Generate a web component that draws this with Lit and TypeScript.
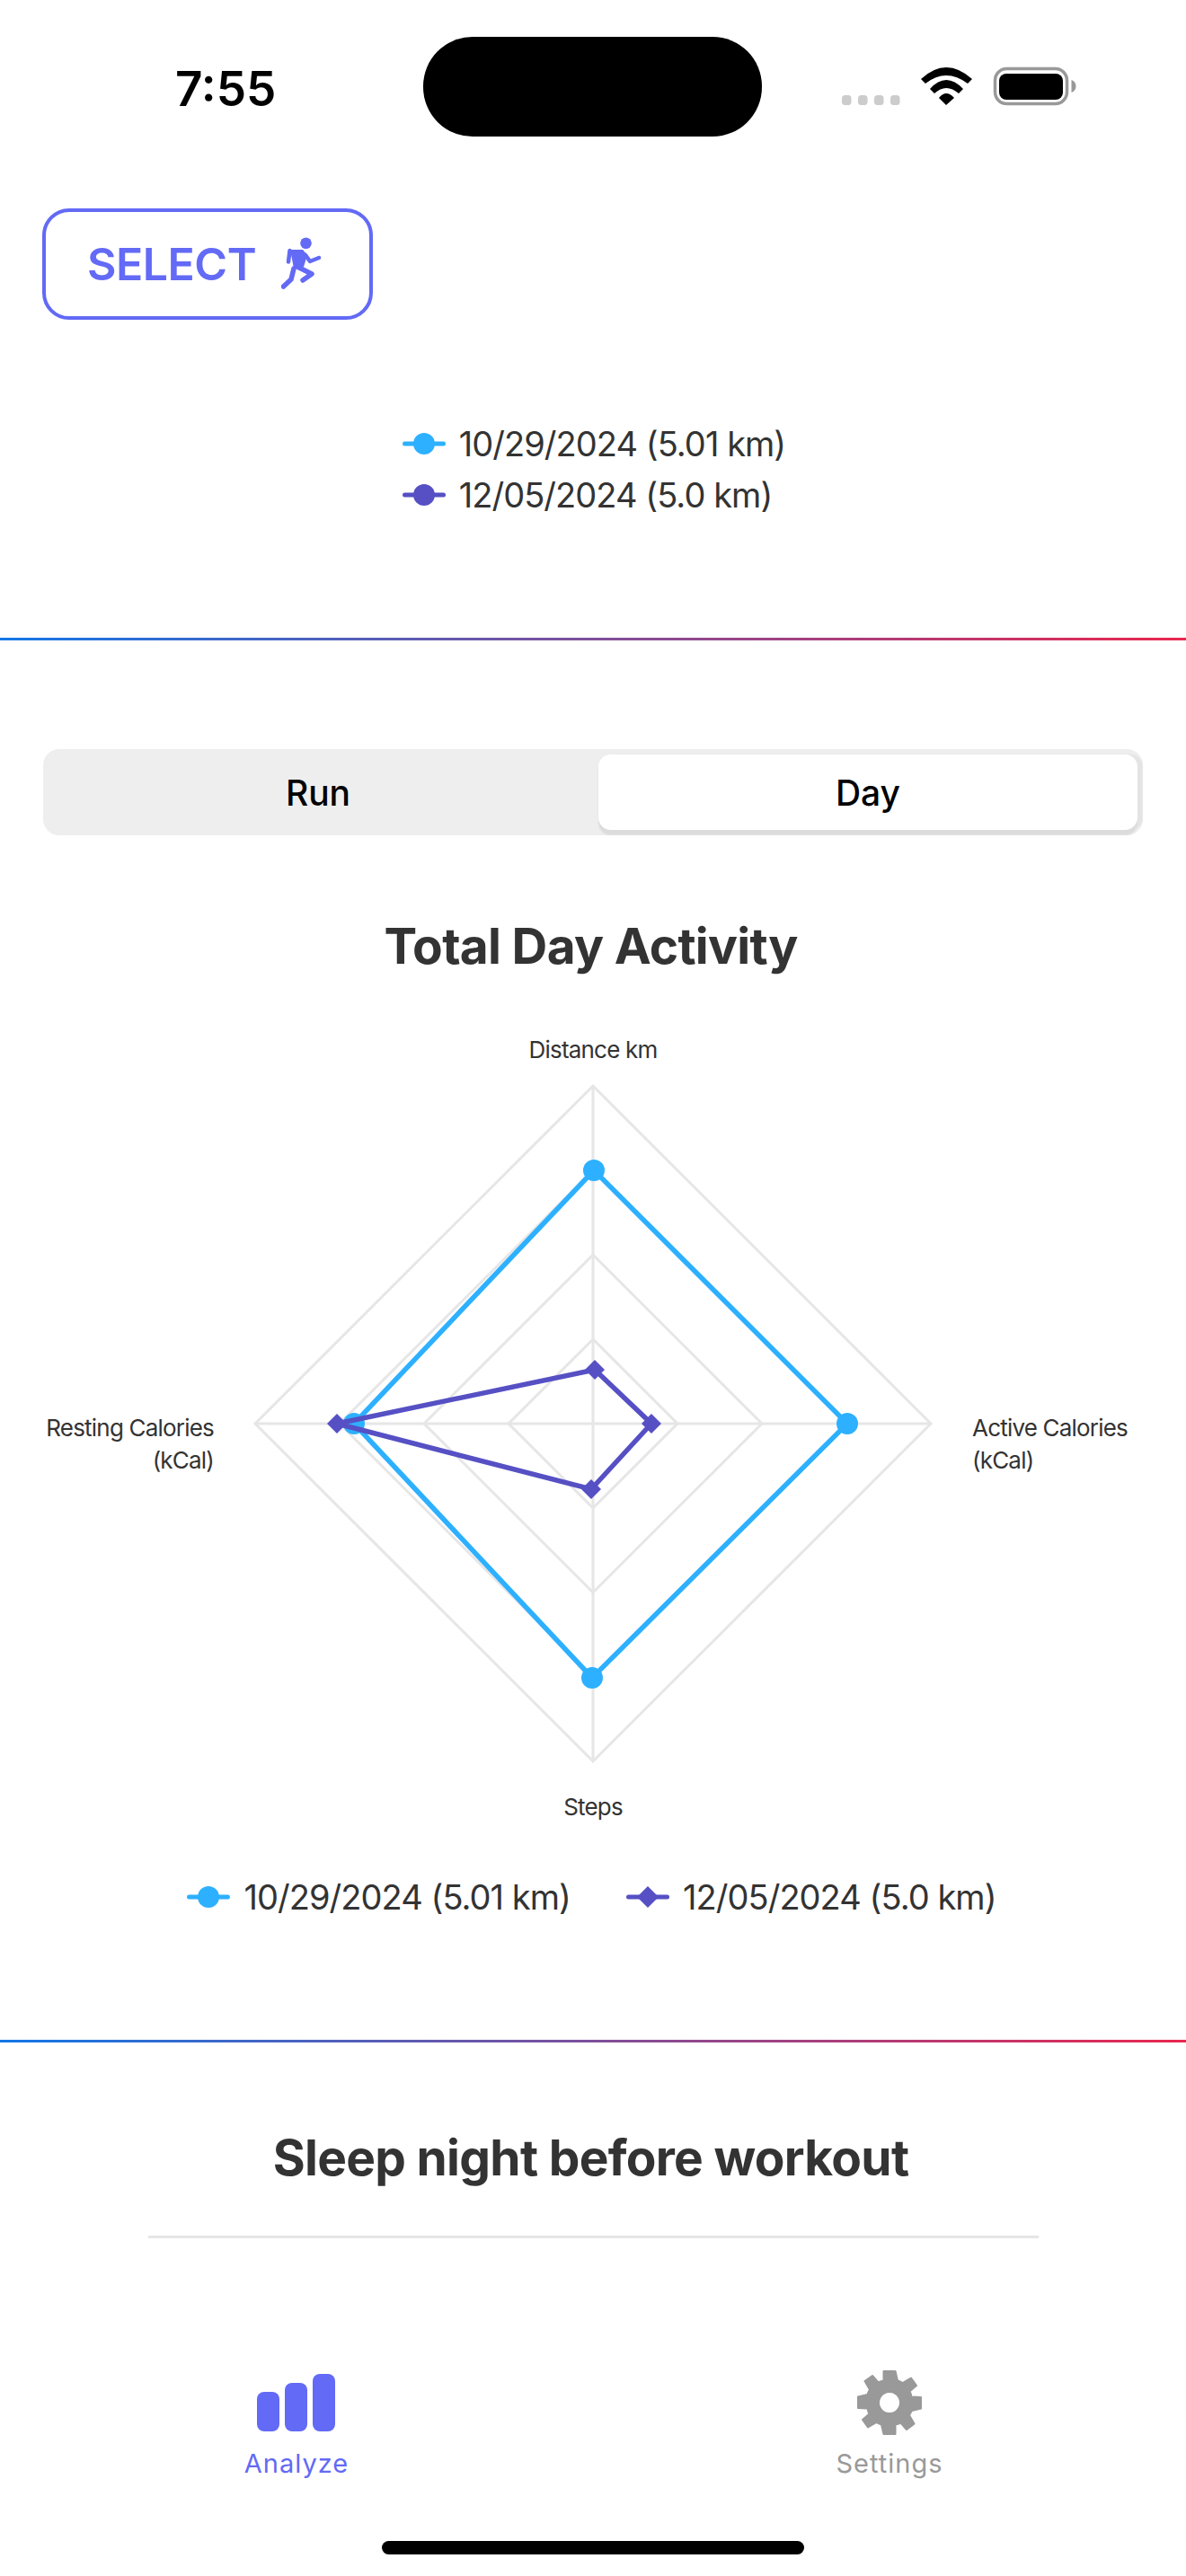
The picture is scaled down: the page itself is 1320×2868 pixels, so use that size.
import { LitElement, html, css, svg } from 'lit';
import { customElement } from 'lit/decorators.js';

const CX = 660;
const CY = 498;
const RING = 94;

const diamond = (r: number) =>
  `${CX},${CY - r} ${CX + r},${CY} ${CX},${CY + r} ${CX - r},${CY}`;

// point positions read as [dx, dy] off the chart centre
const BLUE: [number, number][] = [[1, -282], [283, 0], [-1, 283], [-266, 0]];
const PURPLE: [number, number][] = [[2, -60], [65, 0], [-2, 73], [-285, 0]];

const poly = (pts: [number, number][]) => pts.map(([x, y]) => `${CX + x},${CY + y}`).join(' ');

@customElement('app-root')
export class AppRoot extends LitElement {
  static styles = css`
    :host {
      display: flex;
      flex-direction: column;
      height: 2868px;
      background: #fff;
      font-family: Inter, 'Noto Sans', sans-serif;
      color: #333;
    }

    .status {
      display: grid;
      grid-template-columns: 471px 377px 1fr;
      height: 196px;
      padding-top: 41px;
      box-sizing: border-box;
    }

    .time {
      padding: 34px 0 0 195px;
      font-size: 53px;
      line-height: 48px;
      font-weight: 600;
      color: #000;
    }

    .island {
      height: 111px;
      border-radius: 55px;
      background: #000;
    }

    .status-icons {
      padding-top: 29px;
    }

    .status-icons svg {
      display: block;
    }

    .select-row {
      padding: 36px 0 0 47px;
      height: 178px;
      box-sizing: border-box;
    }

    .select {
      display: flex;
      align-items: center;
      gap: 28px;
      box-sizing: border-box;
      width: 368px;
      height: 124px;
      padding: 0 0 0 46px;
      border: 4px solid #636af5;
      border-radius: 30px;
      background: #fff;
      color: #636af5;
      font: 600 50px Inter, sans-serif;
      letter-spacing: -0.5px;
    }

    .run-legend {
      height: 336px;
      padding: 101px 0 0 2px;
      box-sizing: border-box;
      display: flex;
      justify-content: center;
    }

    .stack {
      display: flex;
      flex-direction: column;
      align-items: flex-start;
      gap: 19px;
    }

    .legend-item {
      display: flex;
      align-items: center;
      gap: 15px;
      font-size: 38px;
      line-height: 38px;
      letter-spacing: -0.95px;
    }

    .rule {
      height: 3px;
      flex: none;
      background: linear-gradient(90deg, #1477e6, #e8274f);
    }

    .segment-wrap {
      padding: 121px 48px 0;
    }

    .segment {
      display: grid;
      grid-template-columns: 1fr 600px;
      height: 96px;
      box-sizing: border-box;
      padding: 6px 6px 6px 0;
      border-radius: 18px;
      overflow: hidden;
      background: #eee;
      font-size: 39px;
      font-weight: 500;
      color: #000;
    }

    .seg {
      display: flex;
      align-items: center;
      justify-content: center;
    }

    .seg.off {
      padding-right: 6px;
    }

    .seg.on {
      border-radius: 14px;
      background: #fff;
      box-shadow: 0 6px 2px #dcdcdc, 6px 0 2px #e4e4e4;
    }

    h2 {
      margin: 0;
      padding-right: 5px;
      text-align: center;
      font-size: 55px;
      line-height: 68px;
      font-weight: 700;
      letter-spacing: -0.7px;
      color: #333;
    }

    .chart-title {
      padding-top: 89px;
    }

    .chart {
      display: block;
      flex: none;
    }

    .grid-line {
      fill: none;
      stroke: #e6e6e6;
      stroke-width: 3;
    }

    .label {
      font-size: 26px;
      letter-spacing: -0.8px;
      fill: #333;
    }

    .chart-legend {
      display: flex;
      justify-content: center;
      align-items: flex-start;
      gap: 62px;
      padding: 3px 3px 0 0;
      height: 181px;
      box-sizing: border-box;
    }

    .sleep {
      padding-top: 94px;
    }

    .sleep-line {
      height: 3px;
      margin: 53px 164px 0 165px;
      background: #e6e6e6;
    }

    .tabs {
      display: grid;
      grid-template-columns: 1fr 1fr;
      padding-top: 147px;
    }

    .tab {
      display: flex;
      flex-direction: column;
      align-items: center;
      gap: 14px;
      font-size: 29px;
      line-height: 36px;
      letter-spacing: 1px;
      color: #999;
    }

    .tab.on {
      color: #636af5;
    }

    .home {
      width: 470px;
      height: 15px;
      margin: 68px auto 0;
      border-radius: 8px;
      background: #000;
    }
  `;

  private dot(color: string) {
    return html`<svg width="48" height="24" viewBox="0 0 48 24">
      <rect x="0" y="9.5" width="48" height="5" rx="2.5" fill=${color}></rect>
      <circle cx="24" cy="12" r="12" fill=${color}></circle>
    </svg>`;
  }

  private rhomb(color: string) {
    return html`<svg width="48" height="24" viewBox="0 0 48 24">
      <rect x="0" y="9.5" width="48" height="5" rx="2.5" fill=${color}></rect>
      <path d="M24 0l12 12-12 12-12-12z" fill=${color}></path>
    </svg>`;
  }

  private radar() {
    const rings = [1, 2, 3, 4].map(
      (n) => svg`<polygon class="grid-line" points=${diamond(n * RING)}></polygon>`
    );
    return html`<svg class="chart" width="1320" height="1003" viewBox="0 0 1320 1003">
      ${rings}
      <line class="grid-line" x1=${CX} y1=${CY - 376} x2=${CX} y2=${CY + 376}></line>
      <line class="grid-line" x1=${CX - 376} y1=${CY} x2=${CX + 376} y2=${CY}></line>
      <polygon points=${poly(BLUE)} fill="none" stroke="#2db0ff" stroke-width="5.5"></polygon>
      ${BLUE.map(([x, y]) => svg`<circle cx=${CX + x} cy=${CY + y} r="12" fill="#2db0ff"></circle>`)}
      <polygon points=${poly(PURPLE)} fill="none" stroke="#5650c4" stroke-width="5.5"></polygon>
      ${PURPLE.map(
        ([x, y]) => svg`<path d="M${CX + x} ${CY + y - 11}l11 11-11 11-11-11z" fill="#5650c4"></path>`
      )}
      <text class="label" x="660" y="91" text-anchor="middle">Distance km</text>
      <text class="label" x="238" y="512" text-anchor="end">Resting Calories</text>
      <text class="label" x="238" y="548" text-anchor="end">(kCal)</text>
      <text class="label" x="1082" y="512">Active Calories</text>
      <text class="label" x="1082" y="548">(kCal)</text>
      <text class="label" x="660" y="934" text-anchor="middle">Steps</text>
    </svg>`;
  }

  render() {
    return html`
      <div class="status">
        <div class="time">7:55</div>
        <div class="island"></div>
        <div class="status-icons">
          <svg width="352" height="50" viewBox="848 70 352 50">
            <g fill="#ccc">
              <rect x="937" y="106" width="10.5" height="11" rx="3.5"></rect>
              <rect x="955" y="106" width="10.5" height="11" rx="3.5"></rect>
              <rect x="973" y="106" width="10.5" height="11" rx="3.5"></rect>
              <rect x="991" y="106" width="10.5" height="11" rx="3.5"></rect>
            </g>
            <path
              d="M1025 88Q1053 62 1082 88L1077 93Q1053 75 1030 93ZM1035 99Q1053 79 1072 99L1067 104Q1053 92 1040 104ZM1045 109Q1053 99 1062 109L1053 117Z"
              fill="#000"
            ></path>
            <rect x="1107.5" y="76.5" width="80" height="39" rx="13" fill="none" stroke="#999" stroke-width="3.5"></rect>
            <rect x="1112" y="82" width="71" height="29" rx="8" fill="#000"></rect>
            <path d="M1192.5 89c3 1 5 3.5 5 7s-2 6-5 7z" fill="#999"></path>
          </svg>
        </div>
      </div>

      <div class="select-row">
        <button class="select">
          SELECT
          <svg width="46" height="60" viewBox="0 0 46 60">
            <circle cx="27.5" cy="6.7" r="6.3" fill="currentColor"></circle>
            <path d="M10 14L24 14L29 20L25 33L14 35Z" fill="currentColor"></path>
            <path
              d="M9.5 15L8 27.5M27 20L32 27L42 23"
              fill="none"
              stroke="currentColor"
              stroke-width="4.5"
              stroke-linecap="round"
              stroke-linejoin="round"
            ></path>
            <path
              d="M18 33L34 41L24 48M14 35L11 47L2.5 55"
              fill="none"
              stroke="currentColor"
              stroke-width="5.5"
              stroke-linecap="round"
              stroke-linejoin="round"
            ></path>
          </svg>
        </button>
      </div>

      <div class="run-legend">
        <div class="stack">
          <div class="legend-item">${this.dot('#2db0ff')}10/29/2024 (5.01 km)</div>
          <div class="legend-item">${this.dot('#5650c4')}12/05/2024 (5.0 km)</div>
        </div>
      </div>

      <div class="rule"></div>

      <div class="segment-wrap">
        <div class="segment">
          <div class="seg off">Run</div>
          <div class="seg on">Day</div>
        </div>
      </div>

      <h2 class="chart-title">Total Day Activity</h2>
      ${this.radar()}

      <div class="chart-legend">
        <div class="legend-item">${this.dot('#2db0ff')}10/29/2024 (5.01 km)</div>
        <div class="legend-item">${this.rhomb('#5650c4')}12/05/2024 (5.0 km)</div>
      </div>

      <div class="rule"></div>

      <div class="sleep">
        <h2>Sleep night before workout</h2>
        <div class="sleep-line"></div>
      </div>

      <div class="tabs">
        <div class="tab on">
          <svg width="90" height="72" viewBox="0 0 90 72">
            <rect x="1" y="24" width="25" height="44" rx="8" fill="currentColor"></rect>
            <rect x="32" y="14" width="25" height="54" rx="8" fill="currentColor"></rect>
            <rect x="63" y="4" width="25" height="64" rx="8" fill="currentColor"></rect>
          </svg>
          Analyze
        </div>
        <div class="tab">
          <svg width="72" height="72" viewBox="-36 -36 72 72">
            <path
              fill="currentColor"
              fill-rule="evenodd"
              stroke="currentColor"
              stroke-width="2"
              stroke-linejoin="round"
              d="M-6.5-35H6.5L9-24.5C11-24 13-23 14.5-22L24-27.5L30-19L22.5-12.5C23.500-11 24-9 24.5-6.500L35-6V6.500L24.5 9C24 11 23 12 22 14L27.5 23.500L19 30L12.500 22.500C11 23.500 9 24 6.500 24.500L6.500 35H-6.500L-9 24.500C-11 24-13 23-14.500 22L-24 27.500L-30 19L-22.500 12.500C-23.500 11-24 9-24.500 6.500L-35 6V-6.500L-24.500-9C-24-11-23-13-22-14.500L-27.500-24L-19-30L-12.500-22.500C-11-23.500-9-24-6.500-24.500ZM0-12A12 12 0 1 0 .01-12Z"
            ></path>
          </svg>
          Settings
        </div>
      </div>

      <div class="home"></div>
    `;
  }
}
